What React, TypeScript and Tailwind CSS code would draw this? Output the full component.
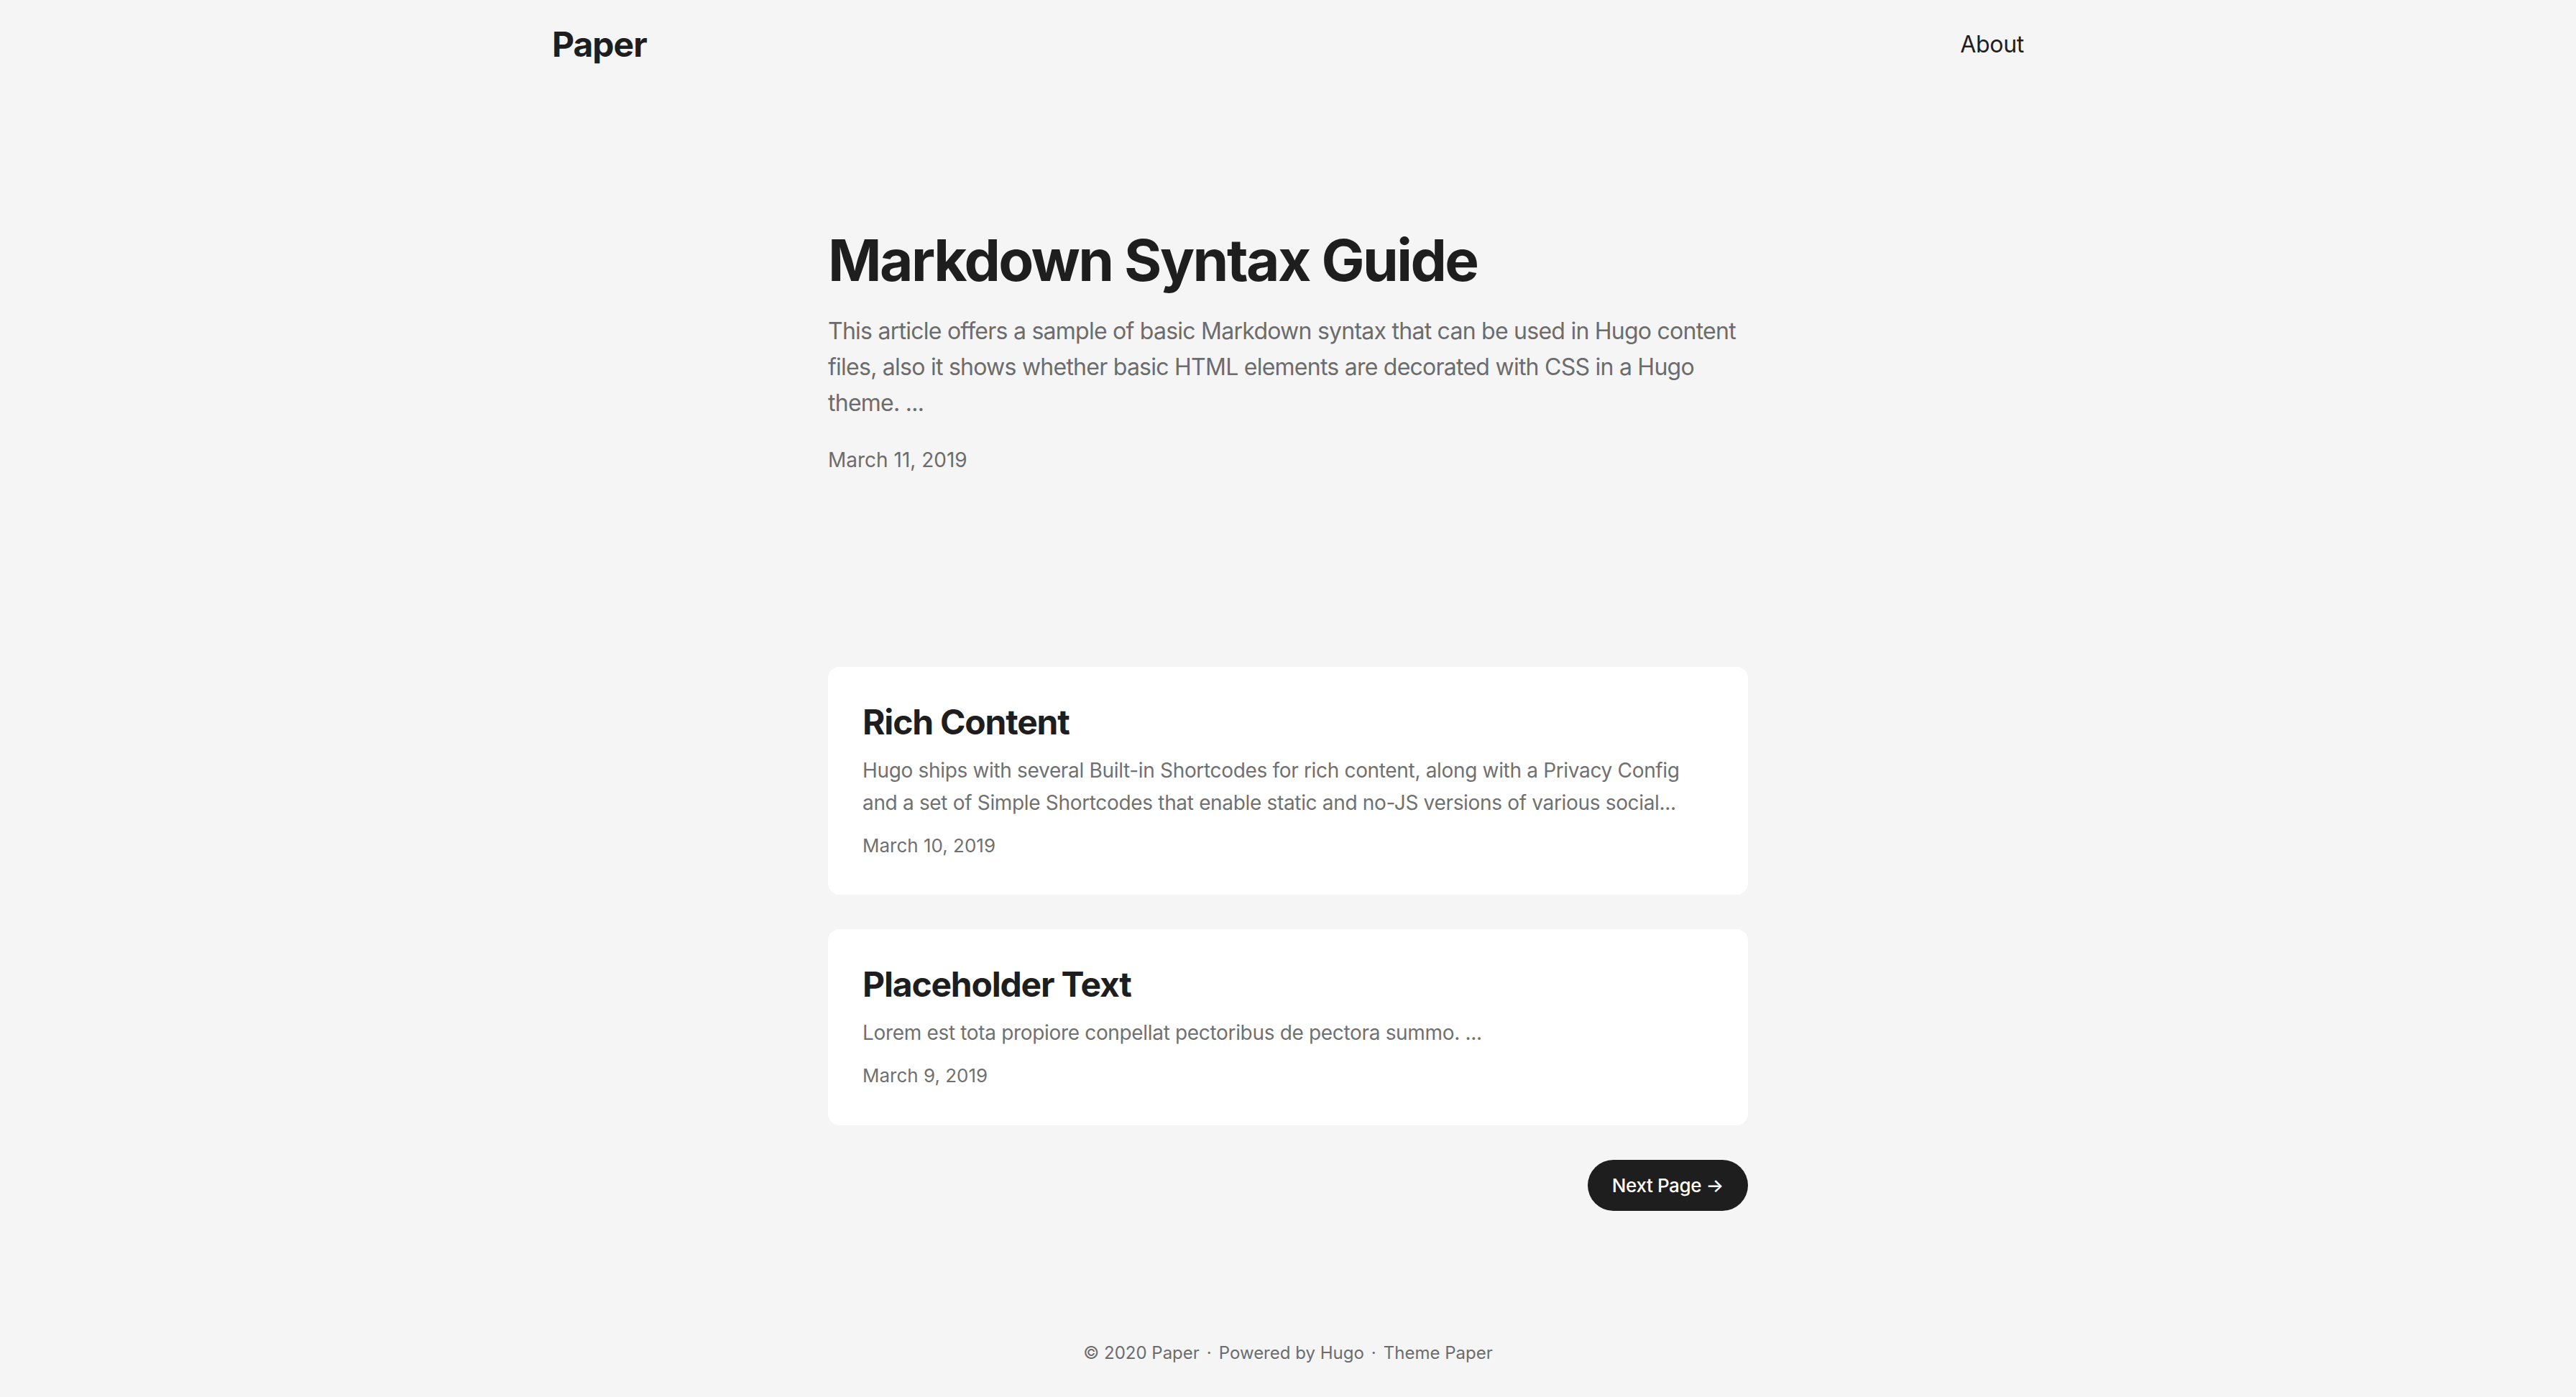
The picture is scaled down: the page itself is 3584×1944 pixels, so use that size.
import React from "react";

const font = { fontFamily: "Inter, 'Noto Sans', sans-serif" };

function Card({ title, excerpt, date }: { title: string; excerpt: string; date: string }) {
  return (
    <article className="rounded-2xl bg-white p-12">
      <h2 className="text-[48px] font-bold leading-[58px] tracking-[-1.2px] text-[#1e1e1e]">{title}</h2>
      <p className="mt-4 text-[28px] leading-[44.8px] tracking-[-0.33px] text-[#707070]">{excerpt}</p>
      <div className="mt-4 text-[26px] leading-[41.6px] text-[#707070]">{date}</div>
    </article>
  );
}

export default function App() {
  return (
    <div className="min-h-[1944px] bg-[#f5f5f5] antialiased" style={font}>
      <header className="mx-auto flex h-[120px] w-[2048px] items-center justify-between pt-1">
        <a className="text-[48px] font-bold leading-none tracking-[-1px] text-[#1e1e1e]">Paper</a>
        <a className="text-[32px] leading-none tracking-[-0.3px] text-[#1e1e1e]">About</a>
      </header>

      <main className="mx-auto w-[1280px] pt-12">
        <section className="flex h-[640px] flex-col justify-center">
          <h1 className="text-[80px] font-bold leading-[96px] tracking-[-2.5px] text-[#1e1e1e]">Markdown Syntax Guide</h1>
          <p className="mt-[26px] text-[32px] leading-[50px] tracking-[-0.75px] text-[#6c6c6c]">
            This article offers a sample of basic Markdown syntax that can be used in Hugo content files, also it
            shows whether basic HTML elements are decorated with CSS in a Hugo theme. ...
          </p>
          <div className="mt-[32px] text-[28px] leading-[44.8px] text-[#6c6c6c]">March 11, 2019</div>
        </section>

        <div className="mt-[120px] flex flex-col gap-12">
          <Card
            title="Rich Content"
            excerpt="Hugo ships with several Built-in Shortcodes for rich content, along with a Privacy Config and a set of Simple Shortcodes that enable static and no-JS versions of various social..."
            date="March 10, 2019"
          />
          <Card
            title="Placeholder Text"
            excerpt="Lorem est tota propiore conpellat pectoribus de pectora summo. ..."
            date="March 9, 2019"
          />
        </div>

        <nav className="mt-12 flex justify-end">
          <a className="rounded-full bg-[#1e1e1e] px-[34px] py-[15px] text-[26px] font-medium leading-[41px] tracking-[-0.4px] text-white">
            Next Page →
          </a>
        </nav>
      </main>

      <footer className="mx-auto mt-[138px] w-[1280px] py-9 text-center text-[24px] leading-[48px] text-[#6c6c6c]">
        <span>© 2020 Paper</span>
        <span className="mx-[10px]">·</span>
        <span>Powered by Hugo</span>
        <span className="mx-[10px]">·</span>
        <span>Theme Paper</span>
      </footer>
    </div>
  );
}
